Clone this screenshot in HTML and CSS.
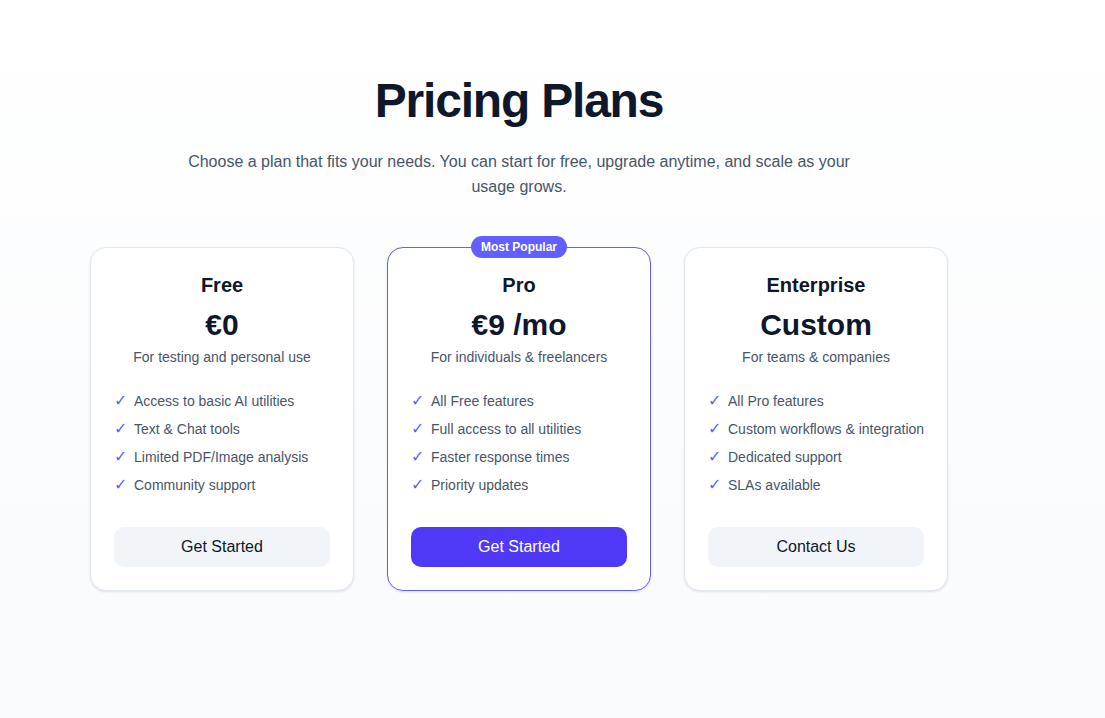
FILE: index.html
```html
<!DOCTYPE html>
<html>
  <head>
    <meta charset="UTF-8">
    <title>Pricing Plans</title>
    <link rel="stylesheet" href="styles.css">
  </head>
  <body>
    <div class="page">
      <div class="intro">
        <h1>Pricing Plans</h1>
        <p>Choose a plan that fits your needs. You can start for free, upgrade anytime, and scale as your usage grows.</p>
      </div>

      <div class="plans">
        <div class="plan">
          <h3>Free</h3>
          <div class="price">€0</div>
          <div class="desc">For testing and personal use</div>
          <ul>
            <li><span class="check">✓</span>Access to basic AI utilities</li>
            <li><span class="check">✓</span>Text &amp; Chat tools</li>
            <li><span class="check">✓</span>Limited PDF/Image analysis</li>
            <li><span class="check">✓</span>Community support</li>
          </ul>
          <button class="btn">Get Started</button>
        </div>

        <div class="plan featured">
          <span class="badge">Most Popular</span>
          <h3>Pro</h3>
          <div class="price">€9 /mo</div>
          <div class="desc">For individuals &amp; freelancers</div>
          <ul>
            <li><span class="check">✓</span>All Free features</li>
            <li><span class="check">✓</span>Full access to all utilities</li>
            <li><span class="check">✓</span>Faster response times</li>
            <li><span class="check">✓</span>Priority updates</li>
          </ul>
          <button class="btn primary">Get Started</button>
        </div>

        <div class="plan">
          <h3>Enterprise</h3>
          <div class="price">Custom</div>
          <div class="desc">For teams &amp; companies</div>
          <ul>
            <li><span class="check">✓</span>All Pro features</li>
            <li><span class="check">✓</span>Custom workflows &amp; integration</li>
            <li><span class="check">✓</span>Dedicated support</li>
            <li><span class="check">✓</span>SLAs available</li>
          </ul>
          <button class="btn">Contact Us</button>
        </div>
      </div>
    </div>
  </body>
</html>
```

FILE: styles.css
```css
html, body {
  margin: 0;
  min-height: 100%;
}

body {
  font-family: 'Liberation Sans', Arial, sans-serif;
  color: #0f172a;
  background: linear-gradient(to bottom, #ffffff 0%, #f8fafc 100%);
  min-height: 718px;
}

.page {
  width: 1038px;
  padding: 77px 0 80px 0;
}

.intro {
  text-align: center;
}

.intro h1 {
  margin: 0;
  font-size: 48px;
  line-height: 48px;
  font-weight: 700;
  letter-spacing: -0.025em;
  color: #0f172a;
}

.intro p {
  margin: 24px auto 0 auto;
  max-width: 672px;
  font-size: 16px;
  line-height: 25px;
  color: #475569;
}

.plans {
  margin: 48px auto 0 auto;
  width: 858px;
  display: grid;
  grid-template-columns: repeat(3, 264px);
  gap: 33px;
}

.plan {
  position: relative;
  background: #fff;
  border: 1px solid #e2e8f0;
  border-radius: 16px;
  box-shadow: 0 1px 3px rgba(15, 23, 42, 0.08), 0 1px 2px rgba(15, 23, 42, 0.04);
  padding: 23px;
  text-align: center;
}

.plan.featured {
  border-color: #615fff;
}

.badge {
  position: absolute;
  top: -12px;
  left: 50%;
  transform: translateX(-50%);
  background: #615fff;
  color: #fff;
  font-size: 12px;
  font-weight: 700;
  line-height: 22px;
  padding: 0 10px;
  border-radius: 999px;
  white-space: nowrap;
}

.plan h3 {
  margin: 0;
  font-size: 20px;
  line-height: 28px;
  font-weight: 700;
}

.price {
  margin-top: 8px;
  font-size: 30px;
  line-height: 36px;
  font-weight: 700;
}

.desc {
  margin-top: 4px;
  font-size: 14px;
  line-height: 20px;
  color: #475569;
}

.plan ul {
  list-style: none;
  margin: 24px 0 0 0;
  padding: 0;
  text-align: left;
}

.plan li {
  font-size: 14px;
  line-height: 20px;
  color: #475569;
  margin-bottom: 8px;
  white-space: nowrap;
}

.plan li:last-child {
  margin-bottom: 0;
}

.check {
  display: inline-block;
  width: 20px;
  color: #615fff;
  font-family: 'DejaVu Sans', sans-serif;
  font-size: 16px;
}

.btn {
  display: block;
  width: 100%;
  margin-top: 32px;
  height: 40px;
  border: none;
  border-radius: 10px;
  background: #f1f5f9;
  color: #0f172a;
  font-family: 'Liberation Sans', Arial, sans-serif;
  font-size: 16px;
  cursor: pointer;
}

.btn.primary {
  background: #4f39f6;
  color: #fff;
}
```
